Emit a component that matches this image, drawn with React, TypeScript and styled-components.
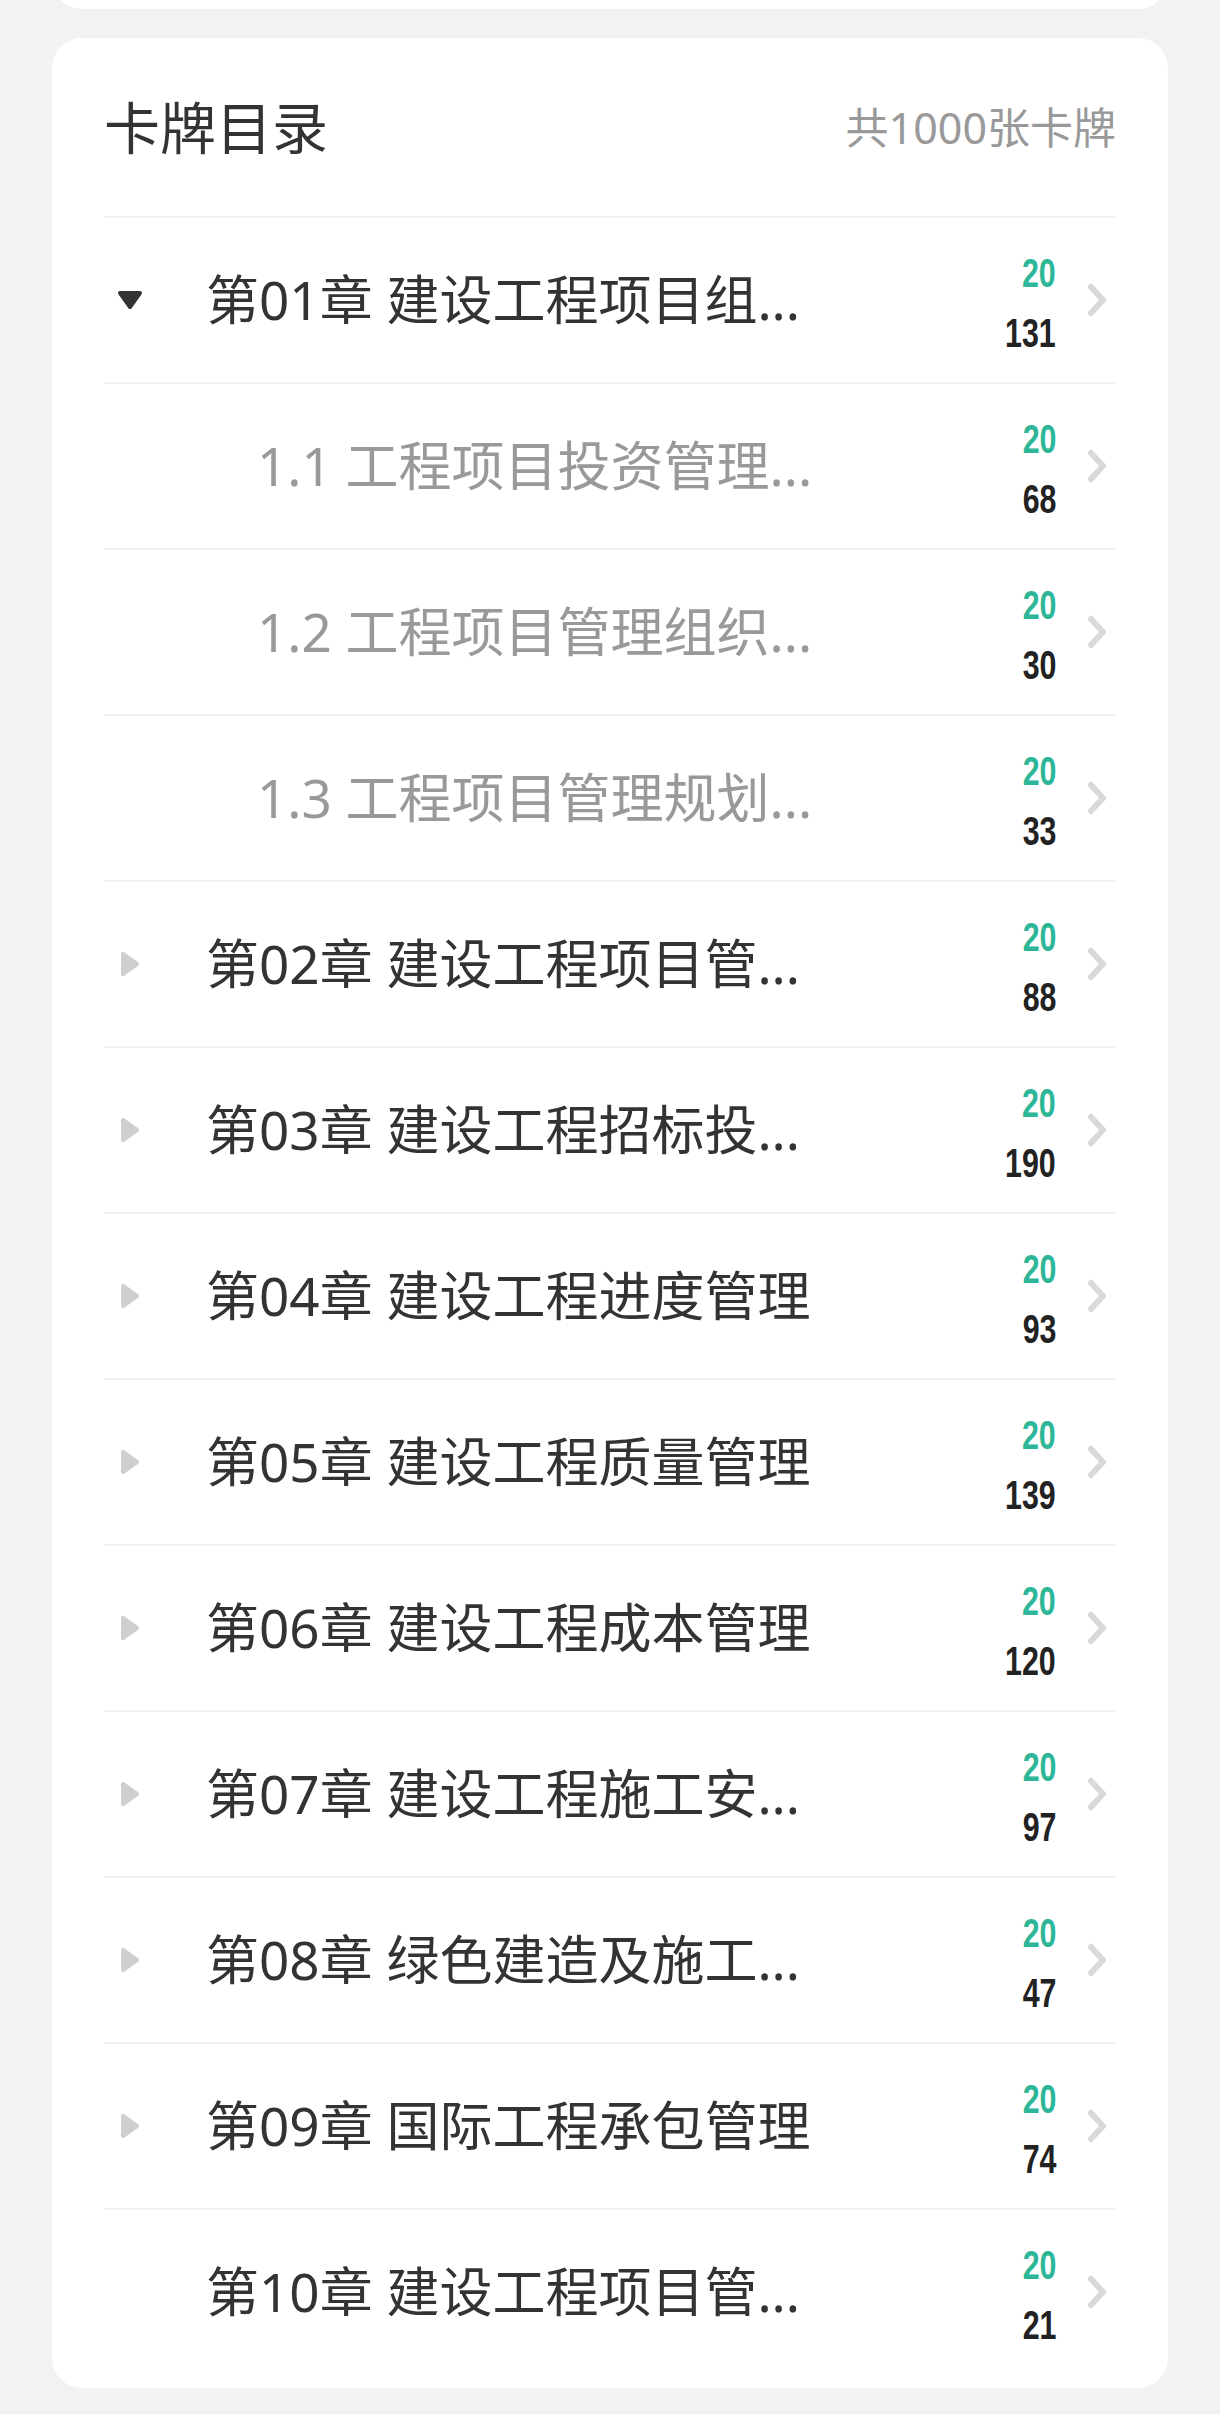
import React from 'react';
import styled, { createGlobalStyle } from 'styled-components';

const GlobalStyle = createGlobalStyle`
  html, body {
    margin: 0;
    padding: 0;
    background: #f2f2f2;
  }
  * {
    box-sizing: border-box;
  }
`;

const Page = styled.div`
  min-height: 2414px;
  padding: 0 52px;
  background: #f2f2f2;
  font-family: "Noto Sans", "Noto Sans CJK SC", sans-serif;
  overflow: hidden;
`;

const PrevCard = styled.div`
  height: 60px;
  margin-top: -51px;
  background: #fff;
  border-radius: 30px;
`;

const Card = styled.div`
  margin-top: 29px;
  background: #fff;
  border-radius: 30px;
  padding: 0 52px 14px;
`;

const Header = styled.div`
  height: 178px;
  display: flex;
  align-items: center;
  justify-content: space-between;
`;

const Title = styled.h2`
  margin: 0;
  font-size: 56px;
  font-weight: 400;
  color: #333;
  line-height: 1;
`;

const Total = styled.span`
  font-size: 43px;
  color: #999;
  line-height: 1;
`;

const Row = styled.div`
  display: flex;
  align-items: center;
  height: 166px;
  border-top: 2px solid #f2f2f2;
`;

const Toggle = styled.div`
  width: 52px;
  display: flex;
  justify-content: center;
  align-items: center;
`;

const Name = styled.div<{ $sub?: boolean }>`
  margin-left: ${p => (p.$sub ? '101px' : '50px')};
  font-size: 53px;
  line-height: 1.2;
  color: ${p => (p.$sub ? '#999' : '#333')};
  white-space: nowrap;
`;

const Counts = styled.div`
  margin-left: auto;
  padding-top: 6px;
  display: flex;
  flex-direction: column;
  align-items: flex-end;
  gap: 30px;
  font-family: "Liberation Sans", sans-serif;
  font-weight: 700;
  font-size: 40px;
  line-height: 30px;
  transform: scaleX(0.76);
  transform-origin: right center;
`;

const Done = styled.span`
  color: #2db798;
`;

const All = styled.span`
  color: #222;
`;

const Chevron = styled.svg`
  margin-left: 31px;
  margin-right: 9px;
`;

type Item = {
  name: string;
  sub?: boolean;
  arrow?: 'open' | 'closed';
  done: number;
  all: number;
};

const items: Item[] = [
  { name: '第01章 建设工程项目组...', arrow: 'open', done: 20, all: 131 },
  { name: '1.1 工程项目投资管理...', sub: true, done: 20, all: 68 },
  { name: '1.2 工程项目管理组织...', sub: true, done: 20, all: 30 },
  { name: '1.3 工程项目管理规划...', sub: true, done: 20, all: 33 },
  { name: '第02章 建设工程项目管...', arrow: 'closed', done: 20, all: 88 },
  { name: '第03章 建设工程招标投...', arrow: 'closed', done: 20, all: 190 },
  { name: '第04章 建设工程进度管理', arrow: 'closed', done: 20, all: 93 },
  { name: '第05章 建设工程质量管理', arrow: 'closed', done: 20, all: 139 },
  { name: '第06章 建设工程成本管理', arrow: 'closed', done: 20, all: 120 },
  { name: '第07章 建设工程施工安...', arrow: 'closed', done: 20, all: 97 },
  { name: '第08章 绿色建造及施工...', arrow: 'closed', done: 20, all: 47 },
  { name: '第09章 国际工程承包管理', arrow: 'closed', done: 20, all: 74 },
  { name: '第10章 建设工程项目管...', done: 20, all: 21 },
];

const Arrow = ({ type }: { type?: 'open' | 'closed' }) => {
  if (type === 'open') {
    return (
      <svg width="28" height="22" viewBox="0 0 28 22">
        <path d="M4 4 L24 4 L14 18 Z" fill="#333" stroke="#333" strokeWidth="4" strokeLinejoin="round" />
      </svg>
    );
  }
  if (type === 'closed') {
    return (
      <svg width="22" height="28" viewBox="0 0 22 28">
        <path d="M4 4 L18 14 L4 24 Z" fill="#cfcfcf" stroke="#cfcfcf" strokeWidth="4" strokeLinejoin="round" />
      </svg>
    );
  }
  return null;
};

const App = () => {
  return (
    <>
      <GlobalStyle />
      <Page>
        <PrevCard />
        <Card>
          <Header>
            <Title>卡牌目录</Title>
            <Total>共1000张卡牌</Total>
          </Header>
          {items.map((item, i) => (
            <Row key={i}>
              <Toggle>
                <Arrow type={item.arrow} />
              </Toggle>
              <Name $sub={item.sub}>{item.name}</Name>
              <Counts>
                <Done>{item.done}</Done>
                <All>{item.all}</All>
              </Counts>
              <Chevron width="20" height="34" viewBox="0 0 20 34">
                <path d="M4 4 L16 17 L4 30" fill="none" stroke="#d9d9d9" strokeWidth="6" strokeLinecap="round" strokeLinejoin="round" />
              </Chevron>
            </Row>
          ))}
        </Card>
      </Page>
    </>
  );
};

export default App;
